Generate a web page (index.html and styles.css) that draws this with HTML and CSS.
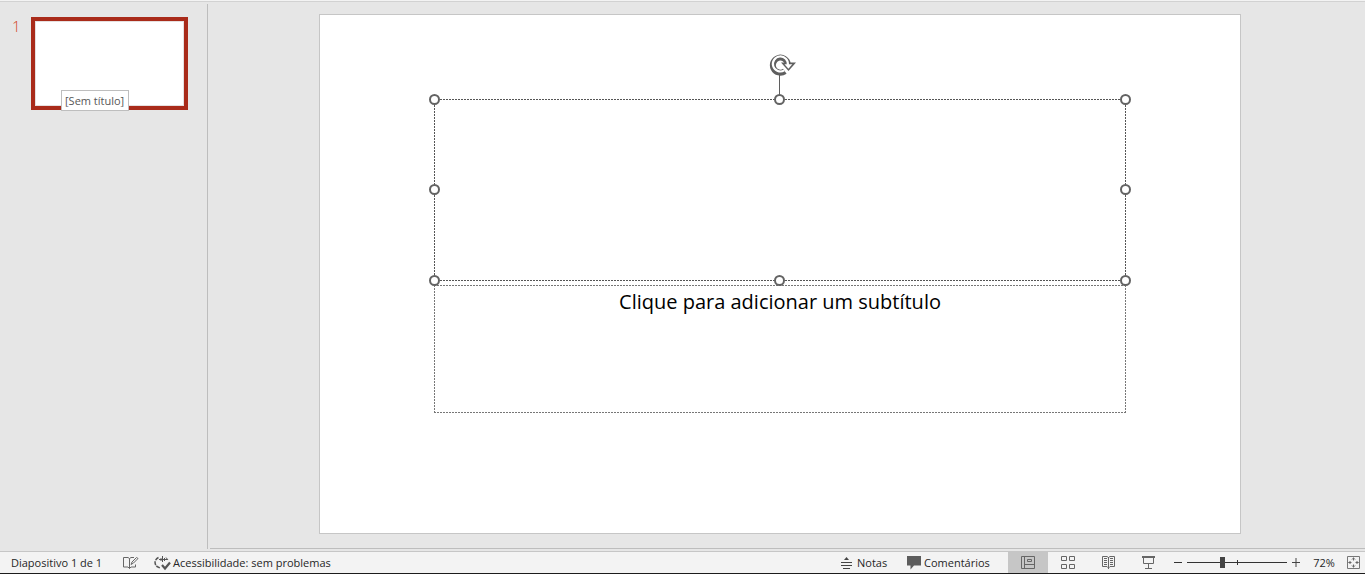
FILE: index.html
```html
<!DOCTYPE html>
<html lang="pt">
<head>
<meta charset="utf-8">
<meta name="viewport" content="width=device-width, initial-scale=1">
<title>Diapositivo 1</title>
<link rel="stylesheet" href="styles.css">
</head>
<body>
<div class="ribbon-edge"></div>
<div class="workspace">
  <aside class="thumbnails">
    <span class="thumb-number">1</span>
    <button class="thumb" type="button" aria-label="Diapositivo 1">
      <span class="thumb-tip">[Sem título]</span>
    </button>
  </aside>
  <main class="editor">
    <section class="slide">
      <div class="placeholder title-box">
        <svg class="rotate" width="30" height="42" viewBox="0 0 30 42" aria-hidden="true">
          <path d="M12.500 20v22" stroke="#5f5f5f" fill="none"/>
          <path d="M17.800 17.200A7.500 7.500 0 1 1 20.800 10" stroke="#5f5f5f" stroke-width="6" fill="none"/>
          <path d="M14 8.500h15l-7.500 8.500z" fill="#5f5f5f"/>
          <path d="M17.200 16.400A7.500 7.500 0 1 1 20.800 11" stroke="#fff" stroke-width="2.200" fill="none"/>
          <path d="M17.500 10.300h7.800l-3.900 4.400z" fill="#fff"/>
        </svg>
        <span class="handle top left"></span>
        <span class="handle top center"></span>
        <span class="handle top right"></span>
        <span class="handle middle left"></span>
        <span class="handle middle right"></span>
        <span class="handle bottom left"></span>
        <span class="handle bottom center"></span>
        <span class="handle bottom right"></span>
      </div>
      <div class="placeholder subtitle-box"><p class="prompt">Clique para adicionar um subtítulo</p></div>
    </section>
  </main>
</div>
<footer class="status">
  <span class="slide-count">Diapositivo 1 de 1</span>
  <button class="tool spelling" type="button" aria-label="Ortografia">
    <svg width="16" height="14" viewBox="0 0 16 14" fill="none" stroke="#666"><path d="M6.500 12.500V2.500L5 1.500H.5v9.500H5l1.500 1.500 1.500-1.500h4.500V8.500M6.500 2.500L8 1.500h3"/><path d="M8 8.500l1-2.500 4.500-4.500 1.500 1L10.500 7z"/></svg>
  </button>
  <button class="tool access" type="button">
    <svg width="17" height="16" viewBox="0 0 17 16" fill="none" stroke="#555"><path d="M4.500 2.500C.5 4.500 0 9 3 11.500l3 1.500" stroke-width="1.500" stroke-dasharray="4 1"/><path d="M8.500 1v6M5 4.500h8M7 3v3M10.500 3v3M12 2.500l2 2.500"/><path d="M8 10l3 3.500 5-6" stroke-width="2.200"/></svg>
    <span>Acessibilidade: sem problemas</span>
  </button>
  <span class="spacer"></span>
  <button class="tool notes" type="button">
    <svg width="12" height="12" viewBox="0 0 12 12" fill="none" stroke="#444"><path d="M0 5.500h11M0 8.500h11M2 11.500h7"/><path d="M3 3l2.500-3L8 3z" fill="#444" stroke="none"/></svg>
    <span>Notas</span>
  </button>
  <button class="tool comments" type="button">
    <svg width="14" height="14" viewBox="0 0 14 14"><path d="M0 0h14v9.500H7L3.500 13.500V9.500H0z" fill="#5c5c5c"/></svg>
    <span>Comentários</span>
  </button>
  <div class="views">
    <button class="view active" type="button" aria-label="Normal">
      <svg width="14" height="13" viewBox="0 0 14 13" fill="none" stroke="#666"><path d="M.5.5h13v12H.5zM3.500.5v12M3.500 8.500h10M6.500 3.500h4v2h-4z"/></svg>
    </button>
    <button class="view" type="button" aria-label="Organizador de diapositivos">
      <svg width="14" height="13" viewBox="0 0 14 13" fill="none" stroke="#666"><path d="M.5.5h5v4h-5zM8.500.5h5v4h-5zM.5 8.500h5v4h-5zM8.500 8.500h5v4h-5z"/></svg>
    </button>
    <button class="view" type="button" aria-label="Vista de leitura">
      <svg width="13" height="13" viewBox="0 0 13 13" fill="none" stroke="#666"><path d="M6.500 1.500L5 .5H.5v10H5l1.500 1.500L8 10.500h4.500V.5H8zM6.500 1v12M2 2.500h3M2 4.500h3M2 6.500h3M2 8.500h3M8 2.500h3M8 4.500h3M8 6.500h3M8 8.500h3"/></svg>
    </button>
    <button class="view" type="button" aria-label="Apresentação">
      <svg width="13" height="13" viewBox="0 0 13 13" fill="none" stroke="#666"><path d="M0 1h13" stroke-width="2"/><path d="M1.500 2v5.500h10V2M6.500 7.500v5M3 12.500h7"/></svg>
    </button>
  </div>
  <div class="zoom">
    <button class="step" type="button" aria-label="Reduzir"><svg width="9" height="9" viewBox="0 0 9 9"><path d="M1 4.500h8" stroke="#333"/></svg></button>
    <span class="range-wrap"><input class="range" type="range" min="0" max="100" value="35" aria-label="Zoom"></span>
    <button class="step" type="button" aria-label="Ampliar"><svg width="9" height="9" viewBox="0 0 9 9"><path d="M0 4.500h8M4 0v9" stroke="#444"/></svg></button>
    <button class="percent" type="button">72%</button>
    <button class="fit" type="button" aria-label="Ajustar à janela"><svg width="13" height="13" viewBox="0 0 13 13" fill="none" stroke="#777"><path d="M.5.5h12v12H.5z"/><path d="M6.500 1.500v3M6.500 8.500v3M1.500 6.500h3M8.500 6.500h3M5 3.500l1.500-1.500L8 3.500M5 9.500L6.500 11 8 9.500M3.500 5L2 6.500 3.500 8M9.500 5L11 6.500 9.500 8" stroke="#666"/></svg></button>
  </div>
</footer>
</body>
</html>
```
FILE: styles.css
```css
* { box-sizing: border-box; }

body {
  margin: 0;
  min-height: 100vh;
  display: flex;
  flex-direction: column;
  background: #e6e6e6;
  color: #262626;
  font-family: "Open Sans", "Noto Sans", sans-serif;
  font-size: 11px;
  line-height: 16px;
}

button {
  margin: 0;
  padding: 0;
  border: 0;
  background: none;
  color: inherit;
  font: inherit;
}

svg { display: block; flex: none; }

.ribbon-edge {
  height: 2px;
  background: #f3f3f3;
  border-bottom: 1px solid #d2d2d2;
}

.workspace {
  flex: 1;
  display: flex;
  padding: 2px 0;
}

.thumbnails {
  flex: none;
  width: 208px;
  display: flex;
  align-items: flex-start;
  padding: 13px 19px 0 12px;
  border-right: 1px solid #bdbdbd;
}

.thumb-number {
  width: 19px;
  color: #d24726;
  font-size: 15px;
  font-weight: 300;
  line-height: 18px;
}

.thumb {
  position: relative;
  flex: 1;
  aspect-ratio: 157 / 93;
  border: 4px solid #a92b1a;
  background: #fff;
  box-shadow: inset 0 0 0 1px #e6e0e0;
}

.thumb-tip {
  position: absolute;
  left: 26px;
  bottom: -5px;
  padding: 1px 4px 1px 3px;
  border: 1px solid #bebebe;
  background: #fff;
  color: #575757;
  line-height: 17px;
  white-space: nowrap;
}

.editor {
  flex: 1;
  min-width: 0;
  margin-left: 2px;
  padding: 10px 124px 14px 109px;
  border-bottom: 1px solid #bdbdbd;
}

.slide {
  display: flex;
  flex-direction: column;
  gap: 4px;
  aspect-ratio: 922 / 520;
  padding: 84px 114px 0;
  border: 1px solid #c6c6c6;
  background: #fff;
}

.placeholder {
  --ink: #777;
  --across: repeating-linear-gradient(90deg, var(--ink) 0 2px, transparent 2px 3px);
  --down: repeating-linear-gradient(var(--ink) 0 2px, transparent 2px 3px);
  position: relative;
  background:
    var(--across) top / 100% 1px no-repeat,
    var(--across) bottom / 100% 1px no-repeat,
    var(--down) left / 1px 100% no-repeat,
    var(--down) right / 1px 100% no-repeat;
}

.title-box {
  --ink: #555;
  z-index: 1;
  height: 182px;
}

.subtitle-box { height: 128px; }

.prompt {
  margin: 0;
  padding-top: 4px;
  color: #000;
  font-size: 20px;
  line-height: 26px;
  text-align: center;
}

.handle {
  position: absolute;
  width: 11px;
  height: 11px;
  border: 2px solid #636363;
  border-radius: 50%;
  background: #fff;
}

.top { top: -5px; }
.middle { top: calc(50% - 6px); }
.bottom { bottom: -5px; }
.left { left: -5px; }
.center { left: calc(50% - 6px); }
.right { right: -5px; }

.rotate {
  position: absolute;
  left: calc(50% - 13px);
  top: -45px;
}

.status {
  display: flex;
  align-items: center;
  height: 23px;
  padding: 0 5px 0 11px;
  border-top: 1px solid #c6c6c6;
  border-bottom: 1px solid #1c1c1c;
  background: #f3f3f3;
  white-space: nowrap;
}

.slide-count { width: 112px; }

.tool {
  display: flex;
  align-items: center;
  gap: 4px;
}

.spelling { width: 31px; }
.access { gap: 2px; }
.spacer { flex: 1; }
.notes { width: 66px; gap: 4px; }
.comments { width: 101px; gap: 3px; }

.views {
  display: flex;
  align-self: stretch;
}

.view {
  display: grid;
  place-items: center;
  width: 40px;
}

.active { background: #c6c6c6; }

.zoom {
  display: flex;
  align-items: center;
  padding-left: 5px;
}

.range-wrap {
  display: flex;
  width: 100px;
  margin: 0 5px;
  background: linear-gradient(#333, #333) center / 1px 5px no-repeat;
}

.range {
  appearance: none;
  width: 100%;
  height: 11px;
  margin: 0;
  background: linear-gradient(#333, #333) center / 100% 1px no-repeat;
}

.range::-webkit-slider-thumb {
  appearance: none;
  width: 5px;
  height: 11px;
  background: #444;
}

.percent { width: 22px; margin: 0 12px; }
```
